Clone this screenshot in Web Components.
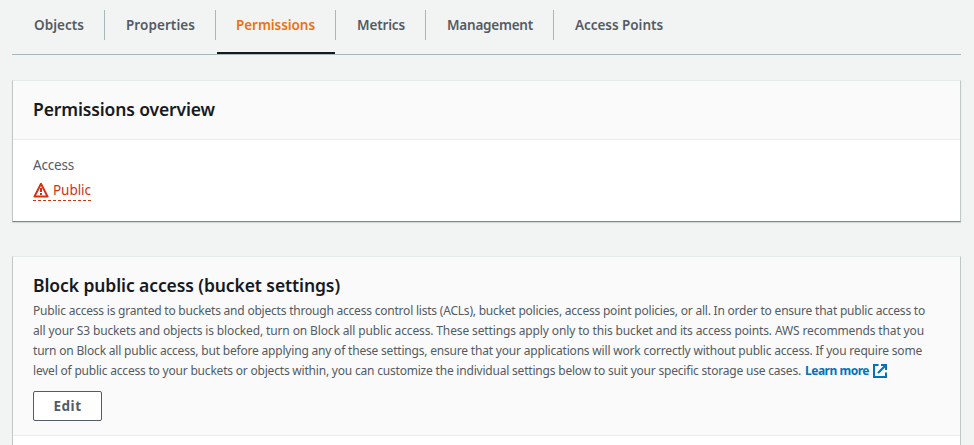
<!DOCTYPE html>
<html lang="en">
<head>
<meta charset="utf-8">
<title>Permissions</title>
<style>
body { margin: 0; height: 445px; overflow: hidden; background: #f2f4f4; color: #545b64; font-family: "Noto Sans", "Open Sans", sans-serif; }
</style>
</head>
<body>
<bucket-page></bucket-page>
<script>
const define = (name, html, setup) => customElements.define(name, class extends HTMLElement {
  connectedCallback() {
    if (this.shadowRoot) return;
    const t = document.createElement('template');
    t.innerHTML = html;
    this.attachShadow({ mode: 'open' }).append(t.content.cloneNode(true));
    if (setup) setup(this);
  }
});

// A single line of text whose tracking is adjusted to fill a given width.
define('text-line', `
<style>
:host { display: inline-block; white-space: nowrap; }
span { display: inline-block; }
</style><span><slot></slot></span>`, el => {
  const span = el.shadowRoot.querySelector('span');
  const want = +el.getAttribute('width');
  const n = el.textContent.length;
  const gap = (want - span.getBoundingClientRect().width) / n;
  span.style.letterSpacing = gap.toFixed(4) + 'px';
  el.style.width = want + 'px';
});

define('tab-item', `
<style>
:host { display: block; position: relative; height: 54px; font: 600 13.5px/22px "Noto Sans", sans-serif; color: #545b64; }
div { box-sizing: border-box; margin-top: 10px; height: 30px; padding: 4px 20px 0 21px; border-right: 1px solid #aab7b8; }
:host([first]) div { padding-left: 22px; }
:host([last]) div { border: 0; }
:host([active]) div { color: #ec7211; padding-left: 20px; }
:host([active])::after { content: ""; position: absolute; left: 1px; right: 1px; bottom: 0; height: 2px; background: #16191f; }
</style><div><slot></slot></div>`);

define('tab-bar', `
<style>
:host { display: flex; height: 54px; border-bottom: 1px solid #aab7b8; }
</style><slot></slot>`);

define('settings-card', `
<style>
:host { display: block; background: #fff; border: 1px solid #c1c7c7; border-top-color: #e6eaea; border-bottom-color: #7b878a; box-shadow: 0 1px 1px #d5dada; }
header { background: #fafafa; border-bottom: 1px solid #eaeded; padding: 16px 20px 14px; }
:host(.overview) header { padding-bottom: 18px; }
:host(.block) section { display: none; }
section { padding: 14px 20px 0; }
</style><header><slot name="header"></slot></header><section><slot></slot></section>`);

define('card-title', `
<style>
:host { display: block; font: 600 17.5px/24px "Noto Sans", sans-serif; color: #16191f; }
</style><slot></slot>`);

define('access-status', `
<style>
:host { display: inline-flex; align-items: center; box-sizing: border-box; height: 22px; font: 400 13.5px/20px "Noto Sans", sans-serif; color: #d13212;
  padding-bottom: 1px; background: repeating-linear-gradient(90deg, #d13212 0 3px, transparent 3px 5px) left bottom / 100% 1px no-repeat; }
svg { display: block; margin-right: 4px; }
</style>
<svg width="16" height="16" viewBox="0 0 16 16"><path d="M8 1.8 14.6 14.6H1.4Z" fill="none" stroke="currentColor" stroke-width="2" stroke-linejoin="round"/><path d="M8 6v4M8 11v2" fill="none" stroke="currentColor" stroke-width="2"/></svg><slot></slot>`);

define('external-link', `
<style>
:host { display: inline-flex; align-items: center; gap: 4px; margin-left: 4px; color: #0073bb; font-weight: 700; vertical-align: top; height: 20px; }
</style><slot></slot>
<svg width="14" height="14" viewBox="0 0 14 14" fill="none" stroke="currentColor" stroke-width="2"><path d="M5.5 1H1V13H13V8.5M8 1H13V6"/><path d="M12.5 1.5 5 9" stroke-width="2.2"/></svg>`);

define('plain-button', `
<style>
:host { display: block; width: 69px; height: 30px; }
button { box-sizing: border-box; width: 100%; height: 100%; margin: 0; padding: 0; background: #fff; border: 1px solid #545b64; border-radius: 2px; font: 700 13.5px/28px "Noto Sans", sans-serif; color: #545b64; }
</style><button><slot></slot></button>`);

define('bucket-page', `
<style>
:host { display: block; box-sizing: border-box; height: 445px; overflow: hidden; padding: 0 13px 0 12px; }
settings-card.overview { margin-top: 25px; height: 140px; }
settings-card.block { margin-top: 34px; height: 188px; border-bottom: 0; box-shadow: none; }
.label { font-size: 13.5px; line-height: 22px; margin-bottom: 3px; }
.copy { display: grid; grid-auto-rows: 20px; font-size: 12px; line-height: 20px; margin-top: 4px; }
plain-button { margin-top: 10px; }
</style>
<tab-bar>
<tab-item first><text-line width="50">Objects</text-line></tab-item>
<tab-item><text-line width="69">Properties</text-line></tab-item>
<tab-item active><text-line width="79">Permissions</text-line></tab-item>
<tab-item><text-line width="48">Metrics</text-line></tab-item>
<tab-item><text-line width="86">Management</text-line></tab-item>
<tab-item last><text-line width="88">Access Points</text-line></tab-item>
</tab-bar>
<settings-card class="overview">
<card-title slot="header"><text-line width="182">Permissions overview</text-line></card-title>
<div class="label"><text-line width="41">Access</text-line></div>
<access-status><text-line width="38">Public</text-line></access-status>
</settings-card>
<settings-card class="block">
<card-title slot="header"><text-line width="307">Block public access (bucket settings)</text-line></card-title>
<div slot="header" class="copy">
<div><text-line width="892">Public access is granted to buckets and objects through access control lists (ACLs), bucket policies, access point policies, or all. In order to ensure that public access to</text-line></div>
<div><text-line width="891">all your S3 buckets and objects is blocked, turn on Block all public access. These settings apply only to this bucket and its access points. AWS recommends that you</text-line></div>
<div><text-line width="889">turn on Block all public access, but before applying any of these settings, ensure that your applications will work correctly without public access. If you require some</text-line></div>
<div><text-line width="768">level of public access to your buckets or objects within, you can customize the individual settings below to suit your specific storage use cases.</text-line><external-link><text-line width="64">Learn more</text-line></external-link></div>
</div>
<plain-button slot="header"><text-line width="28">Edit</text-line></plain-button>
</settings-card>`);
</script>
</body>
</html>
